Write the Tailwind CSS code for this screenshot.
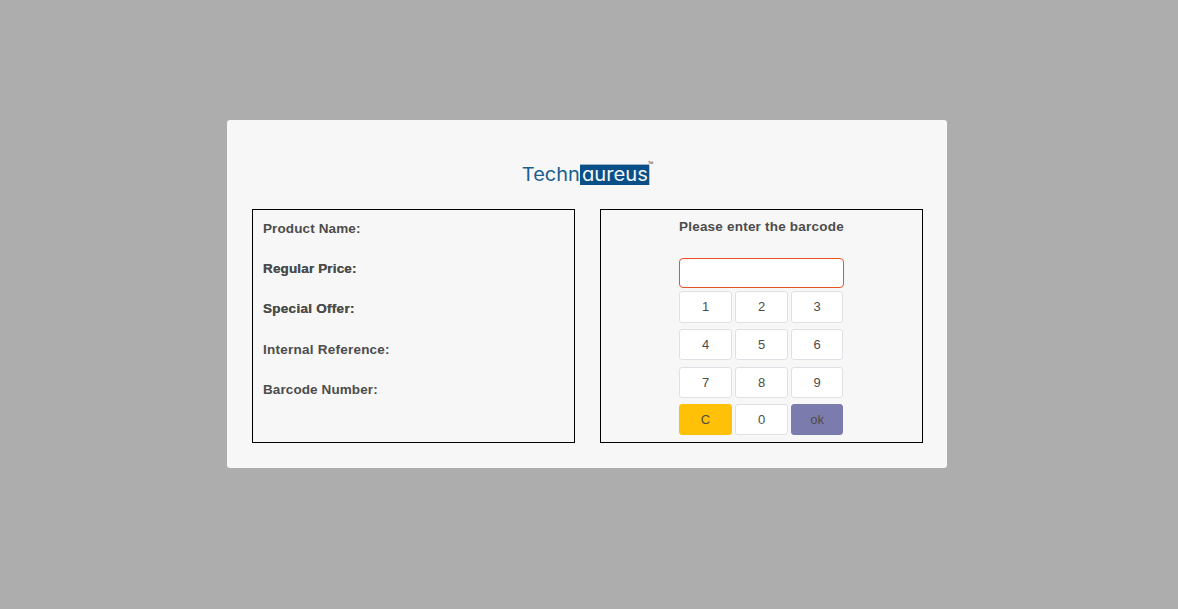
<!DOCTYPE html>
<html lang="en">
<head>
<meta charset="utf-8">
<title>Price Checker</title>
<script src="https://cdn.jsdelivr.net/npm/@tailwindcss/browser@4"></script>
</head>
<body class="bg-[#adadad] h-screen overflow-hidden pt-[120px] pl-[227px] text-[13px] leading-5 text-[#4c4c4c] font-['Liberation_Sans',Arial,sans-serif]">
<main class="w-[720px] h-[348px] rounded-[3px] bg-[#f7f7f7] pl-[25px] pr-[24px] pt-[40px]">
  <header class="flex justify-center h-[49px]">
    <svg class="w-[136px] h-[28px] ml-[1px]" viewBox="520 160 136 28" role="img" aria-label="Technaureus">
      <rect x="580" y="164.6" width="69.3" height="20.4" fill="#0b4f87"/>
      <g class="font-['Inter',sans-serif] [font-feature-settings:'cv11','ss03']" font-size="18.6">
        <text x="521.8" y="181" textLength="58" lengthAdjust="spacingAndGlyphs" fill="#1a5f90">Techn</text>
        <text x="582" y="181" textLength="66" lengthAdjust="spacingAndGlyphs" fill="#f4f8fb">aureus</text>
      </g>
      <text x="647.6" y="165.8" font-size="6.5" textLength="5.8" lengthAdjust="spacingAndGlyphs" fill="#444">™</text>
    </svg>
  </header>
  <div class="flex gap-[25px]">
    <section class="w-[323px] h-[234px] border border-black pl-[10px] pt-[9px] font-bold text-[13.5px] tracking-[0.12px]">
      <p class="h-[40px]">Product Name:</p>
      <p class="h-[40px] tracking-[0.15px] [text-shadow:0_0_0_#4c4c4c]">Regular Price:</p>
      <p class="h-[41px] tracking-[0.28px] [text-shadow:0_0_0_#4c4c4c]">Special Offer:</p>
      <p class="h-[40px] tracking-[0.24px]">Internal Reference:</p>
      <p class="tracking-[0.1px]">Barcode Number:</p>
    </section>
    <section class="w-[323px] h-[234px] border border-black pl-[78px] pt-[7px]">
      <h1 class="font-bold text-[13.5px] tracking-[0.21px] h-[41px] whitespace-nowrap">Please enter the barcode</h1>
      <input aria-label="Barcode" class="block w-[165px] h-[30px] rounded-[4px] border border-[#e95420] bg-white outline-none">
      <div class="mt-[3px] grid grid-cols-[53px_53px_52.4px] gap-x-[3px] grid-rows-[32px_31px_31px_31px] [&>button]:rounded-[3px] [&>button]:border [&>button]:border-[#dee2e6] [&>button]:bg-white">
        <button>1</button><button>2</button><button>3</button>
        <button class="mt-[6px] -mb-[6px]">4</button><button class="mt-[6px] -mb-[6px]">5</button><button class="mt-[6px] -mb-[6px]">6</button>
        <button class="mt-[13px] -mb-[13px]">7</button><button class="mt-[13px] -mb-[13px]">8</button><button class="mt-[13px] -mb-[13px]">9</button>
        <button class="mt-[19px] -mb-[19px] bg-[#ffc107]! border-[#ffc107]!">C</button><button class="mt-[19px] -mb-[19px]">0</button><button class="mt-[19px] -mb-[19px] bg-[#7c7bad]! border-[#7c7bad]!">ok</button>
      </div>
    </section>
  </div>
</main>
</body>
</html>
